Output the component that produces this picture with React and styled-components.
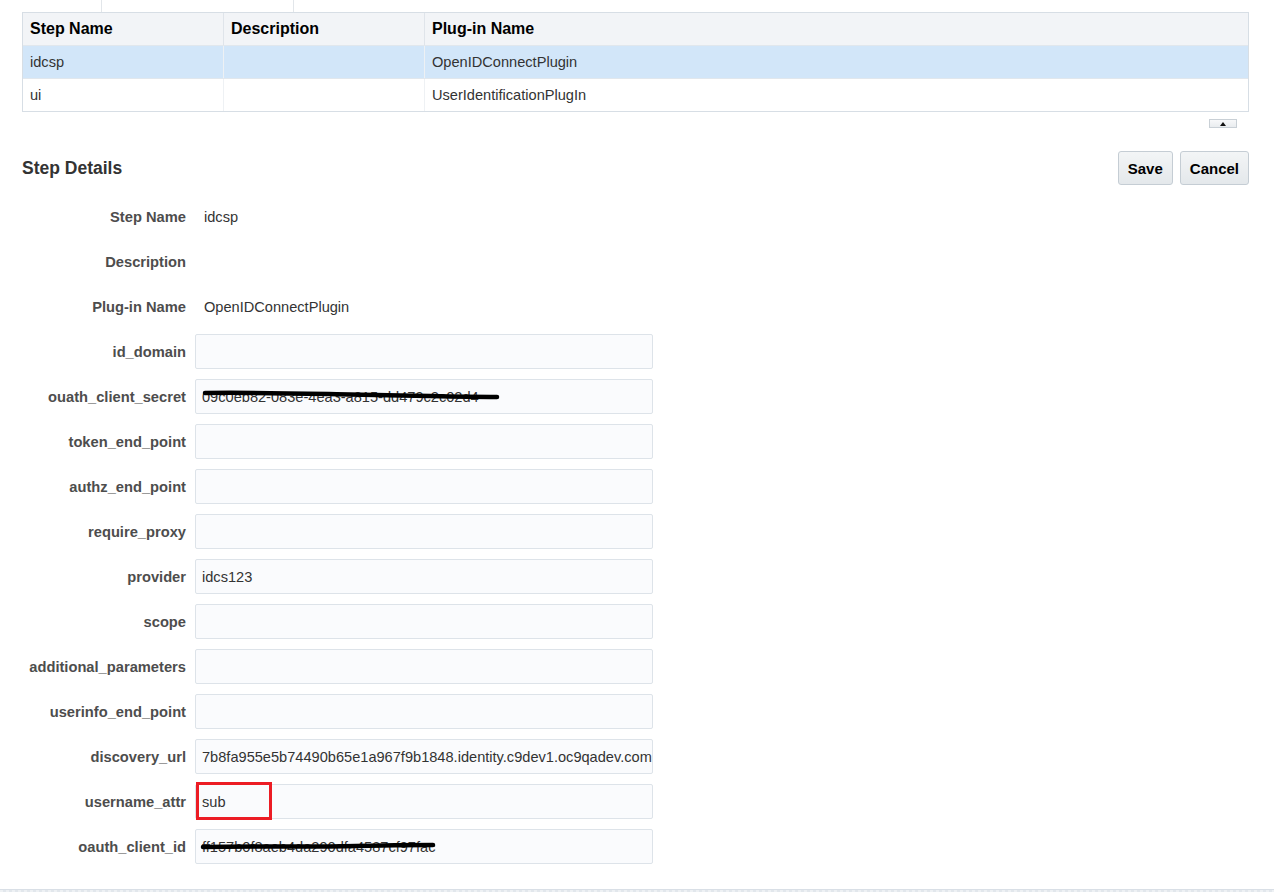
import React from "react";
import styled, { createGlobalStyle } from "styled-components";

const Global = createGlobalStyle`
  html, body { margin: 0; padding: 0; background: #fff; }
  body { font-family: "Liberation Sans", Arial, sans-serif; color: #333; }
`;

const Page = styled.div`
  width: 1274px;
  height: 894px;
  overflow: hidden;
  display: flex;
  flex-direction: column;
`;

const Content = styled.div`
  padding: 0 25px 0 22px;
  display: flex;
  flex-direction: column;
`;

const TabStrip = styled.div`
  height: 12px;
  display: flex;
`;

const TabEdge = styled.div`
  margin-left: 79px;
  width: 191px;
  border-left: 1px solid #e2e6ea;
  border-right: 1px solid #e2e6ea;
`;

const Table = styled.div`
  border: 1px solid #d7dee5;
  display: flex;
  flex-direction: column;
`;

const Row = styled.div`
  display: grid;
  grid-template-columns: 200px 201px 1fr;
  height: 32px;
  background: ${(p) => (p.$header ? "#f2f4f7" : p.$selected ? "#d2e6f9" : "#fff")};
  border-top: ${(p) => (p.$header ? "none" : "1px solid #e1e7ed")};
`;

const Cell = styled.div`
  display: flex;
  align-items: center;
  padding: 0 7px;
  font-size: ${(p) => (p.$header ? "16px" : "14.6px")};
  font-weight: ${(p) => (p.$header ? 700 : 400)};
  color: ${(p) => (p.$header ? "#000" : "#333")};
  border-left: ${(p) => (p.$first ? "none" : `1px solid ${p.$header ? "#dfe4ea" : "#eef1f4"}`)};
`;

const CollapseBar = styled.div`
  display: flex;
  justify-content: flex-end;
  padding: 7px 12px 0 0;
  height: 17px;
`;

const CollapseButton = styled.div`
  width: 26px;
  height: 7px;
  border: 1px solid #c9d0d6;
  background: linear-gradient(#f7f8f9, #e9ecef);
  display: flex;
  align-items: center;
  justify-content: center;
`;

const Triangle = styled.div`
  width: 0;
  height: 0;
  border-left: 3px solid transparent;
  border-right: 3px solid transparent;
  border-bottom: 4px solid #111;
`;

const DetailsHeader = styled.div`
  display: flex;
  align-items: center;
  justify-content: space-between;
  margin-top: 15px;
  height: 34px;
`;

const Title = styled.h2`
  margin: 0;
  font-size: 17.5px;
  font-weight: 700;
  color: #333;
`;

const ButtonGroup = styled.div`
  display: flex;
  gap: 7px;
`;

const Button = styled.button`
  height: 34px;
  padding: 0 9px;
  border: 1px solid #c5cdd4;
  border-radius: 3px;
  background: linear-gradient(#f3f5f6, #e4e8eb);
  font-family: "Liberation Sans", Arial, sans-serif;
  font-size: 15px;
  font-weight: 700;
  color: #000;
`;

const Form = styled.div`
  display: flex;
  flex-direction: column;
  margin-top: 9px;
  margin-left: -22px;
`;

const FormRow = styled.div`
  display: grid;
  grid-template-columns: 186px 458px;
  column-gap: 9px;
  height: 45px;
  align-items: center;
`;

const Label = styled.div`
  text-align: right;
  font-size: 14.7px;
  font-weight: 700;
  color: #4d4d4d;
  white-space: nowrap;
`;

const StaticValue = styled.div`
  padding-left: 9px;
  font-size: 14.6px;
  color: #333;
`;

const InputBox = styled.div`
  position: relative;
  height: 33px;
  border: 1px solid #dde3e9;
  border-radius: 2px;
  background: #fafbfd;
  display: flex;
  align-items: center;
  padding-left: 6px;
  font-size: 14.6px;
  color: #333;
  white-space: nowrap;
  overflow: visible;
`;

const Highlight = styled.div`
  position: absolute;
  left: 0;
  top: -3px;
  width: 70px;
  height: 32px;
  border: 3px solid #ec1c24;
`;

const Scribble = styled.svg`
  position: absolute;
  left: 0;
  top: 0;
  overflow: visible;
  pointer-events: none;
`;

const Footer = styled.div`
  margin-top: auto;
  margin-bottom: 2px;
  height: 2px;
  border-top: 1px solid #d9dfe6;
  background: repeating-linear-gradient(90deg, #eef1f4 0 3px, #e2e7ec 3px 6px);
`;

const fields = [
  { label: "id_domain", value: "" },
  {
    label: "ouath_client_secret",
    value: "09c0eb82-083e-4ea3-a815-dd479c2c02d4",
    strike: "M9 13 C 60 12, 120 14, 180 15 S 260 17, 301 17",
  },
  { label: "token_end_point", value: "" },
  { label: "authz_end_point", value: "" },
  { label: "require_proxy", value: "" },
  { label: "provider", value: "idcs123" },
  { label: "scope", value: "" },
  { label: "additional_parameters", value: "" },
  { label: "userinfo_end_point", value: "" },
  { label: "discovery_url", value: "7b8fa955e5b74490b65e1a967f9b1848.identity.c9dev1.oc9qadev.com" },
  { label: "username_attr", value: "sub", highlight: true },
  {
    label: "oauth_client_id",
    value: "ff157b0f8aeb4da290dfa4587cf97fac",
    strike: "M7 17 C 60 16, 120 17, 160 16 S 215 15, 237 15",
  },
];

export default function App() {
  return (
    <Page>
      <Global />
      <Content>
        <TabStrip>
          <TabEdge />
        </TabStrip>
        <Table>
          <Row $header>
            <Cell $header $first>Step Name</Cell>
            <Cell $header>Description</Cell>
            <Cell $header>Plug-in Name</Cell>
          </Row>
          <Row $selected>
            <Cell $first>idcsp</Cell>
            <Cell />
            <Cell>OpenIDConnectPlugin</Cell>
          </Row>
          <Row>
            <Cell $first>ui</Cell>
            <Cell />
            <Cell>UserIdentificationPlugIn</Cell>
          </Row>
        </Table>
        <CollapseBar>
          <CollapseButton>
            <Triangle />
          </CollapseButton>
        </CollapseBar>
        <DetailsHeader>
          <Title>Step Details</Title>
          <ButtonGroup>
            <Button>Save</Button>
            <Button>Cancel</Button>
          </ButtonGroup>
        </DetailsHeader>
        <Form>
          <FormRow>
            <Label>Step Name</Label>
            <StaticValue>idcsp</StaticValue>
          </FormRow>
          <FormRow>
            <Label>Description</Label>
            <StaticValue />
          </FormRow>
          <FormRow>
            <Label>Plug-in Name</Label>
            <StaticValue>OpenIDConnectPlugin</StaticValue>
          </FormRow>
          {fields.map((f) => (
            <FormRow key={f.label}>
              <Label>{f.label}</Label>
              <InputBox>
                {f.value}
                {f.highlight && <Highlight />}
                {f.strike && (
                  <Scribble width="320" height="35">
                    <path d={f.strike} stroke="#000" strokeWidth="4.5" fill="none" strokeLinecap="round" />
                  </Scribble>
                )}
              </InputBox>
            </FormRow>
          ))}
        </Form>
      </Content>
      <Footer />
    </Page>
  );
}
